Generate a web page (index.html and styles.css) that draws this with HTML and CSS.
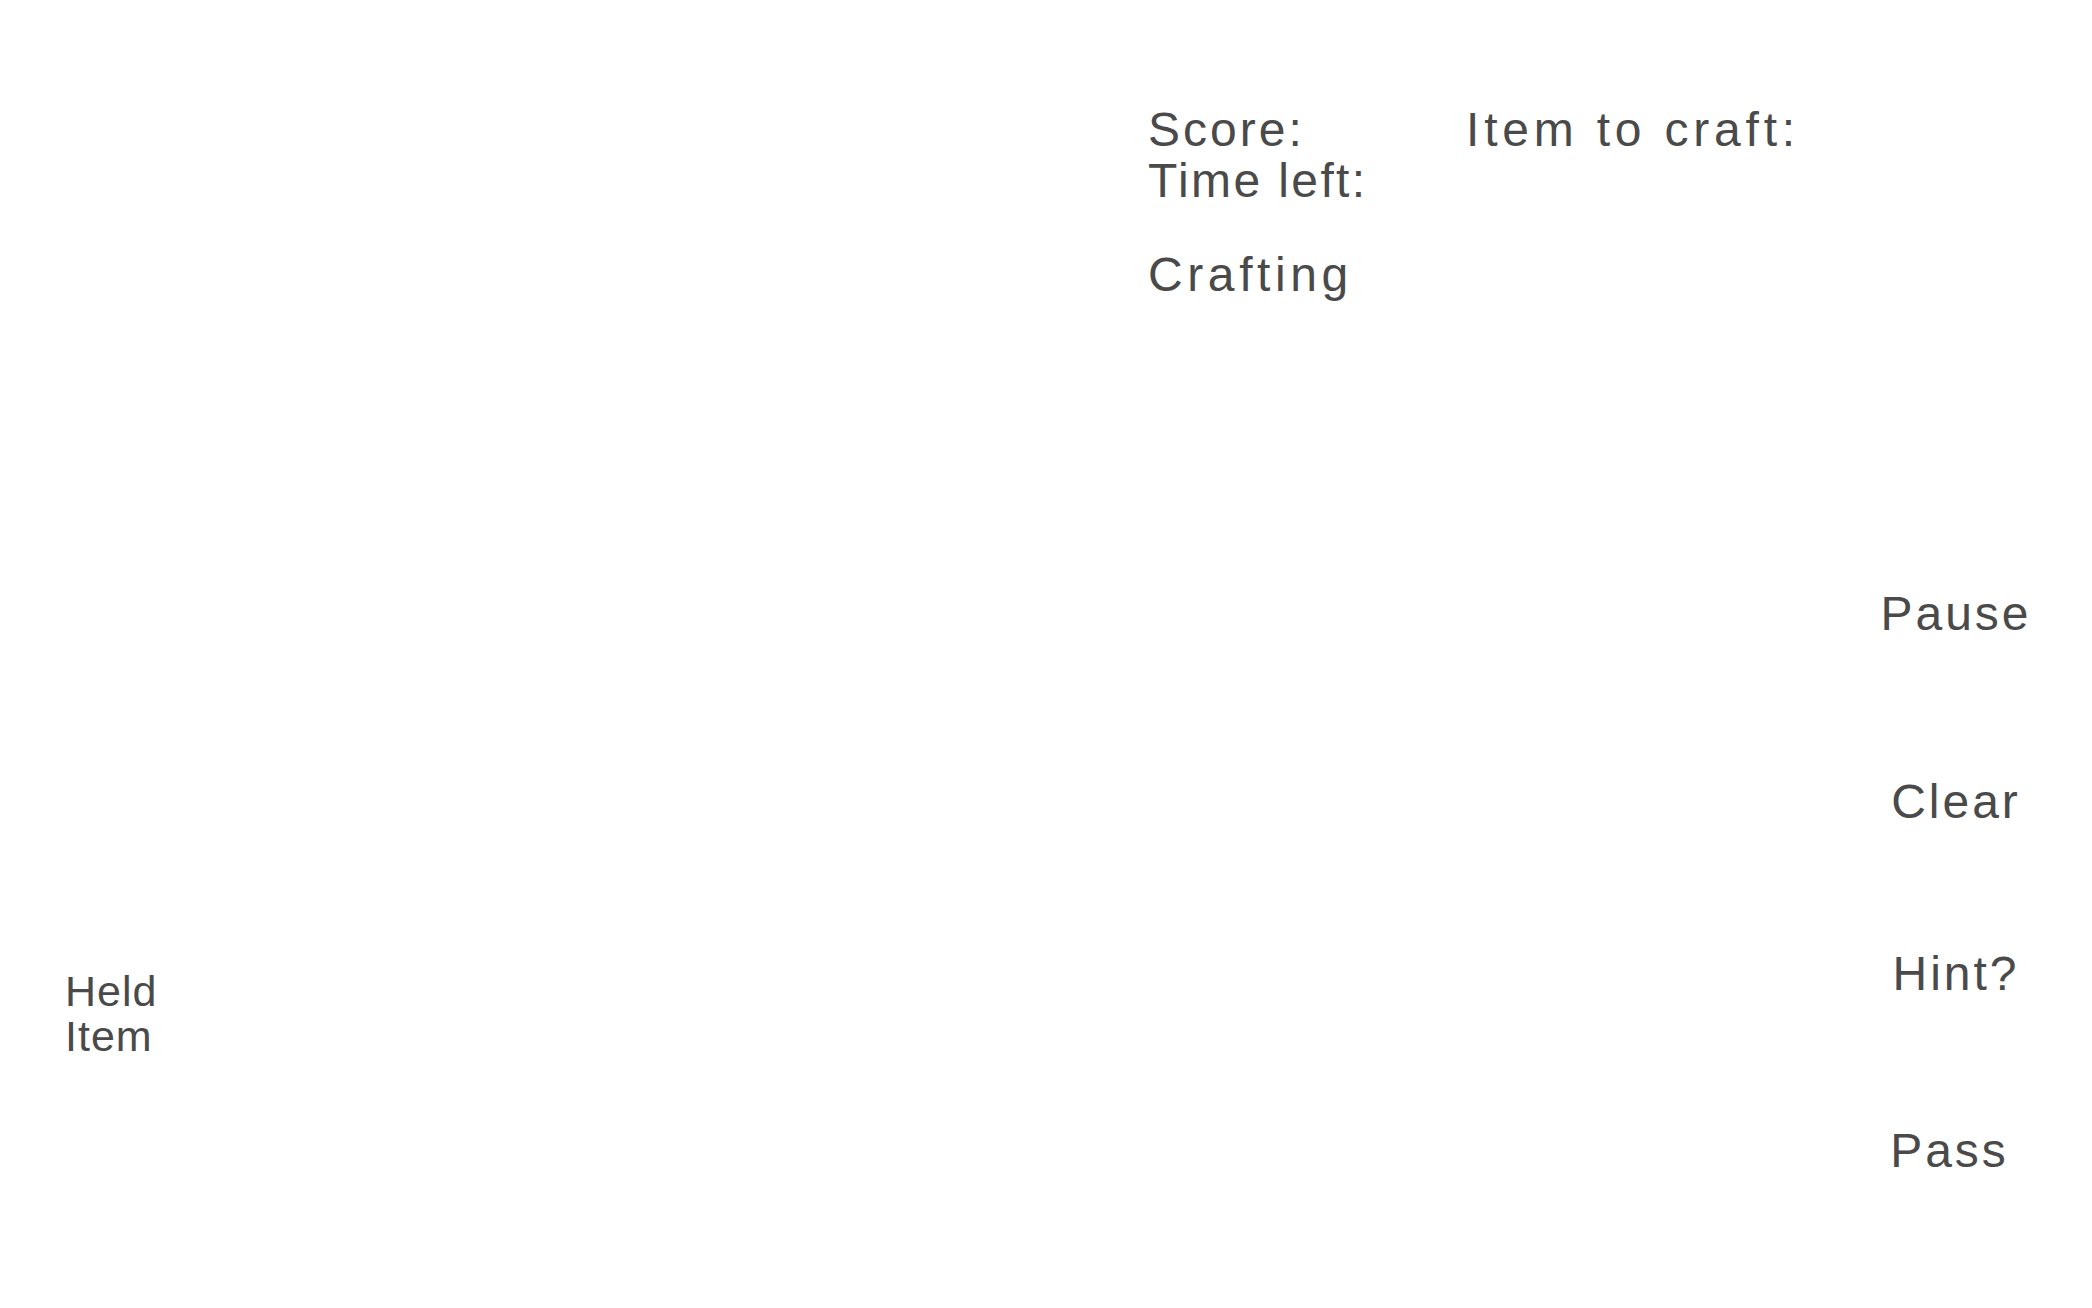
FILE: index.html
```html
<!DOCTYPE html>
<html lang="en">
<head>
<meta charset="utf-8">
<title>Crafting Game</title>
<link rel="stylesheet" href="styles.css">
</head>
<body>
<div class="game">
  <aside class="held">
    <div class="held-label">Held<br>Item</div>
  </aside>
  <main class="board">
    <div class="info-row">
      <div class="stats">
        <div class="stat">Score:</div>
        <div class="stat stat-time">Time left:</div>
      </div>
      <div class="target">Item to craft:</div>
    </div>
    <div class="crafting">Crafting</div>
  </main>
  <nav class="controls">
    <button class="btn btn-pause">Pause</button>
    <button class="btn btn-clear">Clear</button>
    <button class="btn btn-hint">Hint?</button>
    <button class="btn btn-pass">Pass</button>
  </nav>
</div>
</body>
</html>
```
FILE: styles.css
```css
html, body {
  margin: 0;
  padding: 0;
  background: #ffffff;
}

body {
  font-family: "Liberation Sans", Arial, sans-serif;
  color: #4a4a4a;
}

.game {
  display: flex;
  width: 2092px;
  height: 1308px;
  overflow: hidden;
}

.held {
  flex: none;
  width: 1148px;
  box-sizing: border-box;
  padding: 969px 0 0 65px;
}

.held-label {
  font-size: 43px;
  line-height: 45px;
  letter-spacing: 1px;
}

.board {
  flex: none;
  width: 672px;
  padding-top: 104px;
  font-size: 48px;
  line-height: 51px;
  letter-spacing: 3px;
}

.info-row {
  display: flex;
}

.stats {
  flex: none;
  width: 318px;
}

.stat-time {
  letter-spacing: 2.4px;
}

.target {
  letter-spacing: 4.8px;
}

.crafting {
  margin-top: 43px;
  letter-spacing: 4.6px;
}

.controls {
  flex: none;
  width: 272px;
  display: flex;
  flex-direction: column;
  align-items: center;
  padding-top: 588px;
}

.btn {
  background: none;
  border: none;
  padding: 0;
  margin: 0;
  font-family: inherit;
  color: inherit;
  font-size: 48px;
  line-height: 51px;
  letter-spacing: 3px;
  cursor: pointer;
}

.btn-clear {
  margin-top: 137px;
}

.btn-hint {
  margin-top: 121px;
}

.btn-pass {
  margin-top: 126px;
  margin-right: 13px;
}
```
